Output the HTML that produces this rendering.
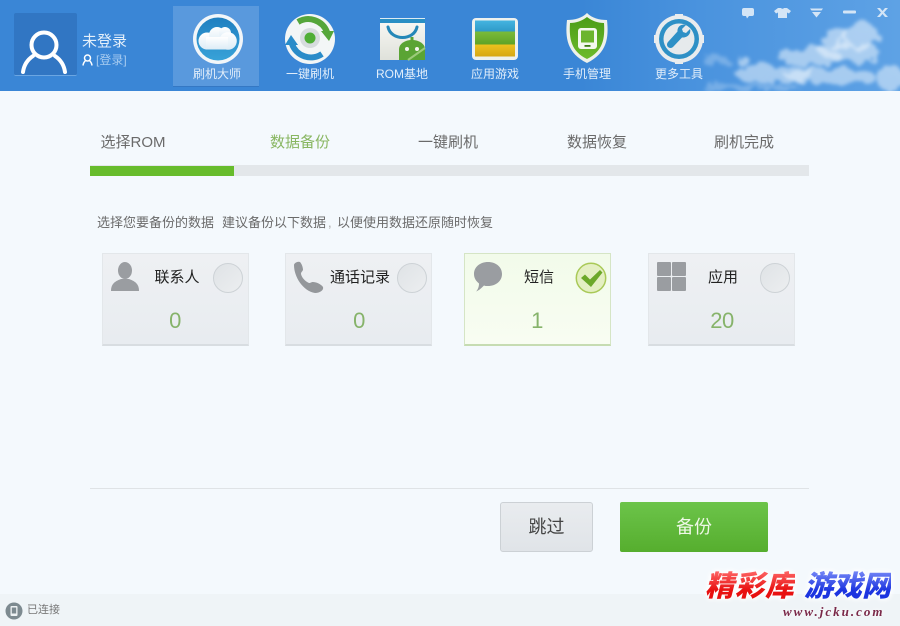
<!DOCTYPE html>
<html><head><meta charset="utf-8">
<style>
html,body{margin:0;padding:0;background:#f4f9fd}
#r{position:relative;width:900px;height:626px;overflow:hidden;background:#f4f9fd;font-family:"Liberation Sans","Noto Sans CJK SC",sans-serif}
#r div,#r svg{position:absolute}
.t{white-space:nowrap;line-height:1}
#hd{left:0;top:0;width:900px;height:91px;background:linear-gradient(90deg,#3a86d6 0,#3a86d6 580px,#4a93de 700px,#5ea2e5 900px)}
.nl{top:68px;width:90px;text-align:center;color:#e2eefa;font-size:12px}
.st{top:135px;font-size:15px;color:#6a6a6a;width:100px;text-align:center}
.card{top:253px;width:145px;height:90px;background:linear-gradient(#eef0f3,#e8ecf0);border:1px solid #e3e7ea;border-bottom:2px solid #d8dde1;box-sizing:content-box}
.ct{top:270px;font-size:15px;color:#222;text-align:center;width:80px}
.cn{top:310px;font-size:22px;color:#86b36a;width:60px;text-align:center;letter-spacing:-.5px}
.rad{top:263px;width:30px;height:30px;border-radius:50%;background:linear-gradient(135deg,#dfe3e6,#eceef0);border:1px solid #cdd2d6;box-sizing:border-box}
.d{top:216px;font-size:13px;color:#6a6a6a}
.wm{top:570px;font-size:29px;font-weight:900;font-style:italic;font-family:"Noto Sans CJK SC",sans-serif;-webkit-background-clip:text;background-clip:text;color:transparent;filter:drop-shadow(0 0 2px #fff) drop-shadow(0 0 3px #fff)}
</style></head><body><div id="r">
<div id="hd"></div>

<!-- clouds -->
<svg style="left:650px;top:0" width="250" height="91" viewBox="0 0 250 91">
<defs><filter id="b" x="-20%" y="-20%" width="140%" height="140%"><feTurbulence type="fractalNoise" baseFrequency=".07" numOctaves="3" seed="4" result="n"/><feDisplacementMap in="SourceGraphic" in2="n" scale="16"/><feGaussianBlur stdDeviation="1.800"/></filter>
<linearGradient id="cg" gradientUnits="userSpaceOnUse" x1="0" y1="20" x2="0" y2="91"><stop offset="0" stop-color="#fff" stop-opacity=".5"/><stop offset="1" stop-color="#d8e9f9" stop-opacity=".6"/></linearGradient></defs>
<g filter="url(#b)" fill="url(#cg)">
<ellipse cx="185" cy="38" rx="15" ry="10"/><ellipse cx="212" cy="36" rx="17" ry="13"/><ellipse cx="200" cy="52" rx="30" ry="10"/><ellipse cx="160" cy="57" rx="32" ry="9"/><ellipse cx="125" cy="74" rx="40" ry="9"/><ellipse cx="180" cy="76" rx="45" ry="8"/><ellipse cx="240" cy="78" rx="14" ry="13"/><ellipse cx="93" cy="61" rx="6" ry="6"/><ellipse cx="65" cy="60" rx="14" ry="4" opacity=".5"/><ellipse cx="100" cy="87" rx="50" ry="3" opacity=".5"/></g></svg>

<!-- avatar -->
<div style="left:14px;top:13px;width:63px;height:62px;background:#3176c3;border-radius:2px;border-bottom:1px solid #6ba6e2"></div>
<svg style="left:14px;top:13px" width="63" height="63" viewBox="0 0 63 63" fill="none" stroke="#fff" stroke-width="4"><circle cx="30" cy="32" r="12.500"/><path d="M9 59c1-7 4-12 10-16M51 59c-1-7-4-12-10-16" stroke-linecap="round"/></svg>
<div class="t" style="left:82px;top:34px;font-size:15px;color:#e3effa">未登录</div>
<svg style="left:82px;top:54px" width="11" height="12" viewBox="0 0 11 12" fill="none" stroke="#fff" stroke-width="1.500"><circle cx="5.500" cy="4" r="3"/><path d="M1 11.500c.3-2.500 1.500-4 2.500-5M10 11.500c-.3-2.500-1.500-4-2.500-5"/></svg>
<div class="t" style="left:96px;top:54px;font-size:12px;color:#a6cbf0">[登录]</div>

<!-- active tab -->
<div style="left:173px;top:6px;width:86px;height:80px;background:#5999dd;box-shadow:0 1px 0 #3478c4"></div>

<!-- 刷机大师 -->
<svg style="left:192px;top:13px" width="52" height="52" viewBox="0 0 52 52"><defs><linearGradient id="bl" x1="0" y1="0" x2="0" y2="1"><stop offset="0" stop-color="#1f7fc0"/><stop offset="1" stop-color="#38a2d8"/></linearGradient><linearGradient id="cl" x1="0" y1="0" x2="0" y2="1"><stop offset="0" stop-color="#fff"/><stop offset="1" stop-color="#dcecf6"/></linearGradient></defs><circle cx="26" cy="26" r="25" fill="#f2f6f9"/><circle cx="26" cy="26" r="21.500" fill="url(#bl)"/><g fill="url(#cl)"><circle cx="15" cy="28" r="8.500"/><circle cx="25" cy="22" r="8"/><circle cx="33" cy="20" r="6"/><circle cx="36" cy="28" r="8.800"/><rect x="14" y="24" width="22" height="12.500"/></g></svg>
<div class="t nl" style="left:172px">刷机大师</div>

<!-- 一键刷机 -->
<svg style="left:284px;top:13px" width="52" height="52" viewBox="0 0 52 52" fill="none"><circle cx="26" cy="26" r="25" fill="#f3f6f6"/><circle cx="26" cy="25" r="10" fill="#d6dcdd"/><circle cx="26" cy="25" r="5.500" fill="#4fae35"/><path d="M14 9A20 20 0 0 1 43 19" stroke="#55a63a" stroke-width="6"/><path d="M37 18H50L45 28z" fill="#55a63a"/><path d="M38 41A20 20 0 0 1 8 31" stroke="#2a8cc9" stroke-width="6"/><path d="M1 32H14L7 22z" fill="#2a8cc9"/></svg>
<div class="t nl" style="left:265px">一键刷机</div>

<!-- ROM基地 -->
<svg style="left:379px;top:17px" width="48" height="46" viewBox="0 0 48 46"><defs><linearGradient id="bg" x1="0" y1="0" x2="0" y2="1"><stop offset="0" stop-color="#fafaf6"/><stop offset="1" stop-color="#dfe1da"/></linearGradient></defs><rect x="1" y="1" width="45" height="42" fill="url(#bg)"/><rect x="1" y="1" width="45" height="1" fill="#dcebf2"/><rect x="1" y="2" width="45" height="4" fill="#2a8fc4"/><path d="M9 10c3 14 26 14 29 0" fill="none" stroke="#2588b8" stroke-width="3" stroke-linecap="round"/><path d="M20 43V32a13 9 0 0 1 26 0v11z" fill="#5aa434"/><path d="M33 20v6" stroke="#5aa434" stroke-width="3"/><circle cx="28" cy="32" r="2" fill="#f4f4ef"/><circle cx="38" cy="32" r="2" fill="#f4f4ef"/><path d="M29 43 46 31" stroke="#9ccb7a" stroke-width="2"/></svg>
<div class="t" style="left:372px;top:68px;width:60px;text-align:center;color:#e2eefa;font-size:12px">ROM基地</div>

<!-- 应用游戏 -->
<svg style="left:472px;top:18px" width="46" height="42" viewBox="0 0 46 42"><defs><linearGradient id="a1" x1="0" y1="0" x2="0" y2="1"><stop offset="0" stop-color="#45b4e0"/><stop offset="1" stop-color="#2f9ac8"/></linearGradient><linearGradient id="a2" x1="0" y1="0" x2="0" y2="1"><stop offset="0" stop-color="#7abb3a"/><stop offset="1" stop-color="#5fa226"/></linearGradient><linearGradient id="a3" x1="0" y1="0" x2="0" y2="1"><stop offset="0" stop-color="#edc21e"/><stop offset="1" stop-color="#d6a714"/></linearGradient></defs><rect width="46" height="42" rx="4" fill="#eef1ee"/><rect x="3" y="2.500" width="40" height="11" fill="url(#a1)"/><rect x="3" y="13.500" width="40" height="13" fill="url(#a2)"/><rect x="3" y="26.500" width="40" height="12" fill="url(#a3)"/></svg>
<div class="t nl" style="left:450px">应用游戏</div>

<!-- 手机管理 -->
<svg style="left:565px;top:13px" width="44" height="50" viewBox="0 0 44 50"><defs><linearGradient id="sg" x1="0" y1="0" x2="0" y2="1"><stop offset="0" stop-color="#4b9c16"/><stop offset="1" stop-color="#6dbb2c"/></linearGradient></defs><path d="M22 0c5 5 12 7 20 7 2 18 0 33-20 43C2 40 0 25 2 7c8 0 15-2 20-7z" fill="#eef1ea"/><path d="M22 4c5 4 11 6 17 6 1 16-1 28-17 36C6 38 4 26 5 10c6 0 12-2 17-6z" fill="url(#sg)"/><rect x="13" y="15" width="19" height="21" rx="3" fill="#f3f8ee"/><rect x="16" y="17.500" width="13" height="12" fill="#6cb52d"/><rect x="19.500" y="32" width="6" height="1.800" fill="#3d7a14"/></svg>
<div class="t nl" style="left:542px">手机管理</div>

<!-- 更多工具 -->
<svg style="left:653px;top:13px" width="52" height="52" viewBox="0 0 52 52"><circle cx="26" cy="26" r="24" fill="#e9ecee"/><path d="M22 1h8v4h-8zM22 47h8v4h-8zM1 22h4v8H1zM47 22h4v8h-4zM8 11l3-3 5 5-3 3zM36 13l5-5 3 3-5 5zM8 41l3 3 5-5-3-3zM36 39l5 5 3-3-5-5z" fill="#e9ecee"/><circle cx="26" cy="26" r="20" fill="#2e90c6"/><circle cx="26" cy="26" r="15.500" fill="#e6eaec"/><path d="M37 16l-4 4-3-1-1-3 4-4c-5-1.500-9 2-8.500 6.500L15 29a3 3 0 0 0 5 5l9-9.500C34 25 38.500 21 37 16z" fill="#2e90c6"/></svg>
<div class="t nl" style="left:634px">更多工具</div>

<!-- window controls -->
<svg style="left:741px;top:7px" width="155" height="15" viewBox="0 0 155 15" fill="#d4e5f6"><path d="M3 1h8a2 2 0 0 1 2 2v4a2 2 0 0 1-2 2H8l-2 2.500-1-2.500H3a2 2 0 0 1-2-2V3a2 2 0 0 1 2-2z"/><path d="M37 1h3c1 1 2 1 3 0h3l4 3-2 2.500-2-1V11h-9V5.500l-2 1L33 4z"/><path d="M69 1.500h13l-1.500 2H70.500zM71 5h9L75.500 10.500z"/><rect x="102" y="3.500" width="13" height="3" rx="1"/><path d="M136 1h3l2.500 3 2.500-3h3l-4 4.500L147 10h-3l-2.500-3-2.500 3h-3l4-4.500z"/></svg>

<!-- steps -->
<div class="t st" style="left:83px">选择ROM</div>
<div class="t st" style="left:250px;color:#88b661">数据备份</div>
<div class="t st" style="left:398px">一键刷机</div>
<div class="t st" style="left:547px">数据恢复</div>
<div class="t st" style="left:694px">刷机完成</div>
<div style="left:90px;top:165px;width:719px;height:11px;background:#e3e7ea"></div>
<div style="left:90px;top:166px;width:144px;height:10px;background:#67bc2c"></div>

<div class="t d" style="left:97px">选择您要备份的数据</div>
<div class="t d" style="left:222px">建议备份以下数据</div>
<div class="t d" style="left:337px">以便使用数据还原随时恢复</div>
<div class="t d" style="left:328px;color:#aaa">,</div>

<!-- cards -->
<div class="card" style="left:102px"></div>
<svg style="left:110px;top:262px" width="30" height="30" viewBox="0 0 30 30" fill="#9a9da1"><ellipse cx="15" cy="8.500" rx="7" ry="8.500"/><path d="M1 29c0-8 5-10 10-12h8c5 2 10 4 10 12z"/></svg>
<div class="t ct" style="left:137px">联系人</div>
<div class="rad" style="left:213px"></div>
<div class="t cn" style="left:145px">0</div>

<div class="card" style="left:285px"></div>
<svg style="left:293px;top:261px" width="32" height="32" viewBox="0 0 32 32" fill="#94979b"><path d="M1 4c0-2 4-4 6-3 2 2 3 6 3 8-1 2-2 2-2 4 1 4 4 7 8 9 2 0 2-1 4-1 3 0 8 2 10 5 1 3-3 6-8 6C10 30 1 16 1 4z"/></svg>
<div class="t ct" style="left:320px">通话记录</div>
<div class="rad" style="left:397px"></div>
<div class="t cn" style="left:329px">0</div>

<div class="card" style="left:464px;background:linear-gradient(#f2fbea,#f8fdf2);border-color:#d5e5c5;border-bottom-color:#c6dcb2"></div>
<svg style="left:473px;top:261px" width="30" height="32" viewBox="0 0 30 32" fill="#9a9da1"><path d="M15 1c8 0 14 5 14 12s-6 12-14 12c-2 0-3 0-4-.500-2 2-5 5-8 6 2-2 3-5 3-8C3 20 1 17 1 13 1 6 7 1 15 1z"/></svg>
<div class="t ct" style="left:499px">短信</div>
<svg style="left:575px;top:262px" width="32" height="32" viewBox="0 0 32 32"><circle cx="16" cy="16" r="14.700" fill="#e4efc2" stroke="#a9c957" stroke-width="1.500"/><path d="M6 16l4-3.500 5 5L25 8l2.500 2.500L16 25z" fill="#6ca829"/></svg>
<div class="t cn" style="left:507px">1</div>

<div class="card" style="left:648px"></div>
<svg style="left:657px;top:262px" width="30" height="30" viewBox="0 0 30 30" fill="#9a9da1"><rect width="14" height="14" rx="1"/><rect x="15" width="14" height="14" rx="1"/><rect y="15" width="14" height="14" rx="1"/><rect x="15" y="15" width="14" height="14" rx="1"/></svg>
<div class="t ct" style="left:683px">应用</div>
<div class="rad" style="left:760px"></div>
<div class="t cn" style="left:692px">20</div>

<!-- bottom -->
<div style="left:90px;top:488px;width:719px;height:1px;background:#dfe3e6"></div>
<div style="left:500px;top:502px;width:93px;height:50px;box-sizing:border-box;background:linear-gradient(#e9ecef,#e0e4e8);border:1px solid #ccd1d5;border-radius:3px"></div>
<div class="t" style="left:500px;top:518px;width:93px;text-align:center;font-size:18px;color:#444">跳过</div>
<div style="left:620px;top:502px;width:148px;height:50px;background:linear-gradient(#6cc44a,#56ae2e);border-radius:2px"></div>
<div class="t" style="left:620px;top:518px;width:148px;text-align:center;font-size:18px;color:#eef8e6">备份</div>

<!-- footer -->
<div style="left:0;top:594px;width:900px;height:32px;background:#eff4f7"></div>
<svg style="left:5px;top:602px" width="18" height="18" viewBox="0 0 18 18"><circle cx="9" cy="9" r="8.500" fill="#7d8a90"/><rect x="5.500" y="4" width="7" height="10" rx="1" fill="#eef2f4"/><rect x="6.800" y="5.500" width="4.400" height="6" fill="#7d8a90"/></svg>
<div class="t" style="left:27px;top:605px;font-size:11px;color:#777">已连接</div>

<!-- watermark -->
<div class="t wm" style="left:705px;letter-spacing:1px;background-image:linear-gradient(#ff6a6a,#e81010 70%)">精彩库</div>
<div class="t wm" style="left:804px;letter-spacing:0;background-image:linear-gradient(#7a8cf8,#1c34e0 70%)">游戏网</div>
<div class="t" style="left:783px;top:605px;font-size:13px;font-weight:bold;font-style:italic;font-family:'Liberation Serif',serif;color:#7a2848;letter-spacing:2px;filter:drop-shadow(0 0 2px #fff)">www.jcku.com</div>
</div></body></html>
